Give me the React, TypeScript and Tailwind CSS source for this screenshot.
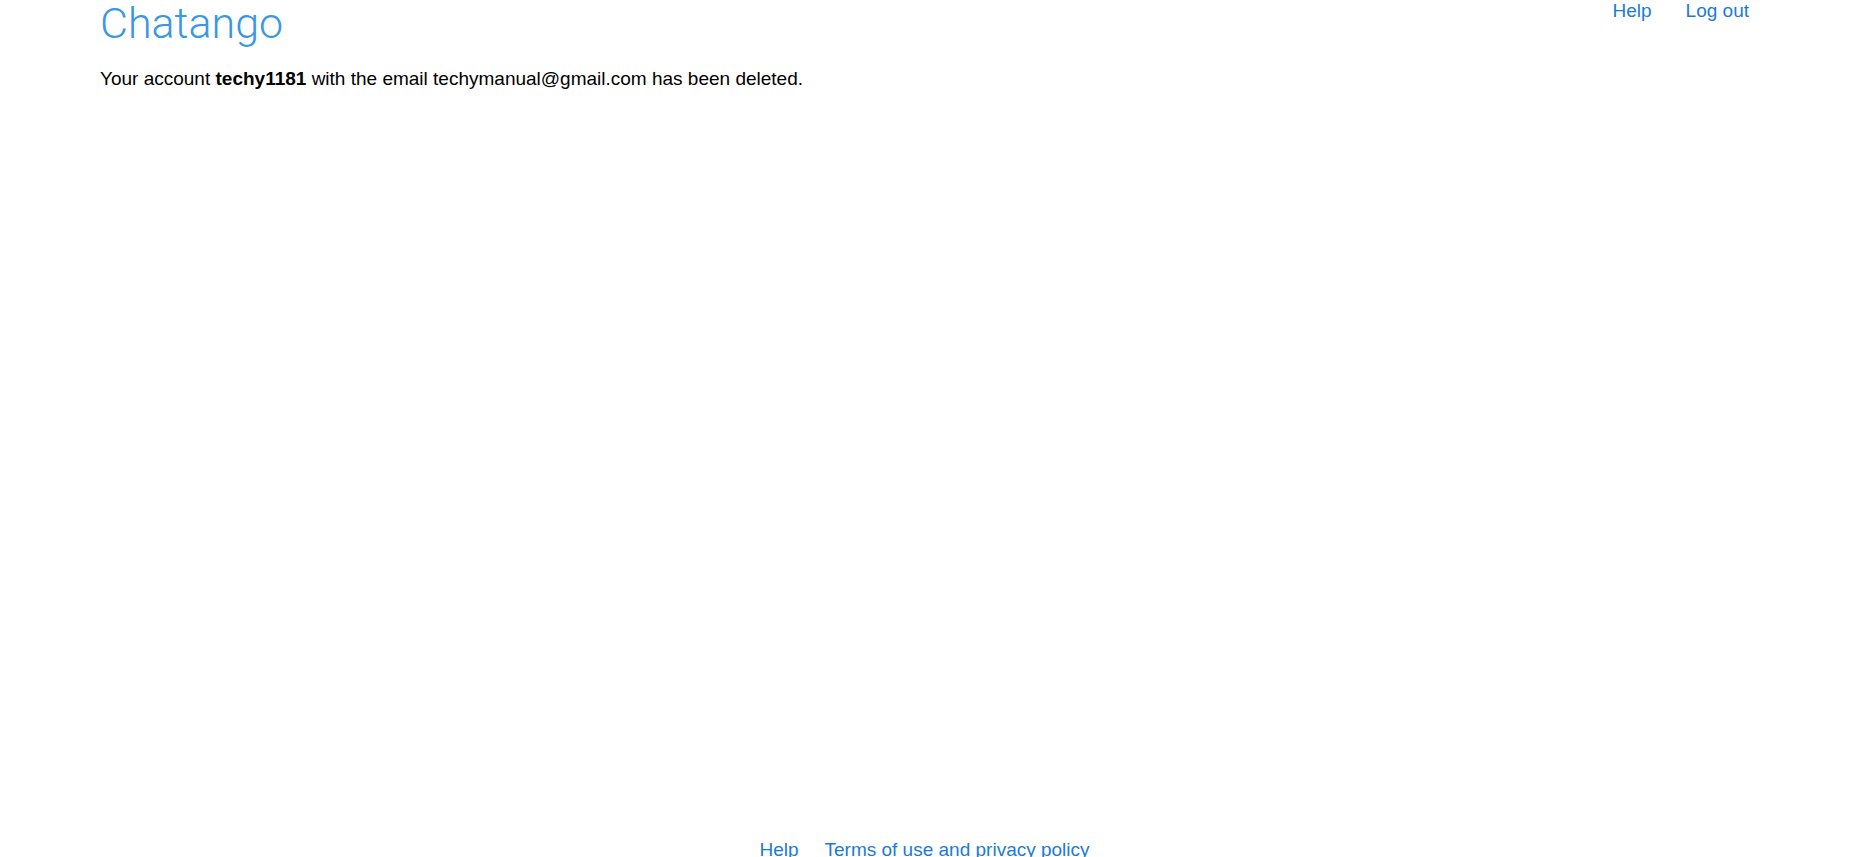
export default function App(): JSX.Element {
  return (
    <div className="flex min-h-[880px] flex-col bg-white font-['Liberation_Sans',Arial,sans-serif] text-black">
      <div className="ml-[100px] flex w-[1649px] flex-1 flex-col">
        <header className="flex items-start justify-between">
          <h1 className="font-['Roboto',sans-serif] text-[43px] font-light leading-[46px] text-[#3b98e0]">
            Chatango
          </h1>
          <nav className="flex gap-[34px] text-[19px] leading-[22px] text-[#1a7bd6]">
            <a href="#">Help</a>
            <a href="#">Log out</a>
          </nav>
        </header>

        <main className="flex-1 pt-[22px]">
          <p className="text-[19px] leading-[22px]">
            Your account <b>techy1181</b> with the email techymanual@gmail.com has been deleted.
          </p>
        </main>

        <footer className="flex justify-center gap-[26px] pb-[19px] text-[19px] leading-[22px] text-[#1a7bd6]">
          <a href="#">Help</a>
          <a href="#">Terms of use and privacy policy</a>
        </footer>
      </div>
    </div>
  );
}
